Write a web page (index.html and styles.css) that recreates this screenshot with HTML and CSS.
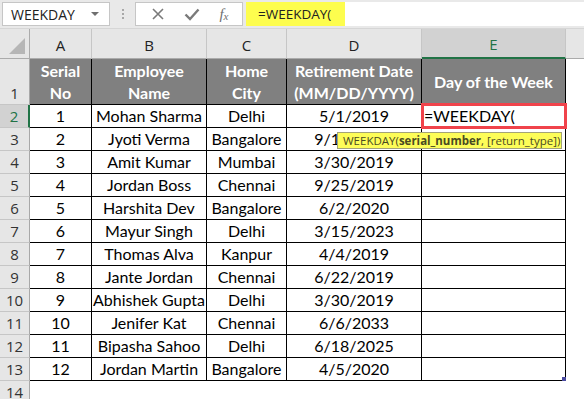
FILE: index.html
```html
<!DOCTYPE html>
<html lang="en">
<head>
  <meta charset="UTF-8" />
  <title>WEEKDAY - Excel</title>
  <link rel="stylesheet" href="styles.css">
</head>
<body>
  <div class="app">
    <div class="formula-bar">
      <div class="name-box">
        <span>WEEKDAY</span>
        <span class="caret"></span>
      </div>
      <div class="grip"><i></i><i></i><i></i></div>
      <div class="fx-buttons">
        <svg width="14" height="14" viewBox="0 0 14 14"><path d="M2 2 L12 12 M12 2 L2 12" stroke="#7a7a7a" stroke-width="1.6" fill="none"/></svg>
        <svg width="16" height="14" viewBox="0 0 16 14"><path d="M1.5 7.5 L6 12 L14.5 2.5" stroke="#7a7a7a" stroke-width="2.4" fill="none"/></svg>
        <span class="fx">f<sub>x</sub></span>
      </div>
      <div class="formula-input"><span class="hl">=WEEKDAY(</span></div>
    </div>

    <div class="sheet">
      <!-- column headers -->
      <div class="ch corner"><span class="tri"></span></div>
      <div class="ch">A</div>
      <div class="ch">B</div>
      <div class="ch">C</div>
      <div class="ch">D</div>
      <div class="ch sel">E</div>
      <div class="ch rest"></div>

      <!-- row 1 : table headings -->
      <div class="rh tall">1</div>
      <div class="th">Serial<br>No</div>
      <div class="th">Employee<br>Name</div>
      <div class="th">Home<br>City</div>
      <div class="th">Retirement Date<br>(MM/DD/YYYY)</div>
      <div class="th">Day of the Week</div>
      <div class="blank"></div>

      <div class="rh sel">2</div><div class="td">1</div><div class="td">Mohan Sharma</div><div class="td">Delhi</div><div class="td">5/1/2019</div><div class="td left">=WEEKDAY(</div><div class="blank"></div>
      <div class="rh">3</div><div class="td">2</div><div class="td">Jyoti Verma</div><div class="td">Bangalore</div><div class="td">9/14/2019</div><div class="td"></div><div class="blank"></div>
      <div class="rh">4</div><div class="td">3</div><div class="td">Amit Kumar</div><div class="td">Mumbai</div><div class="td">3/30/2019</div><div class="td"></div><div class="blank"></div>
      <div class="rh">5</div><div class="td">4</div><div class="td">Jordan Boss</div><div class="td">Chennai</div><div class="td">9/25/2019</div><div class="td"></div><div class="blank"></div>
      <div class="rh">6</div><div class="td">5</div><div class="td">Harshita Dev</div><div class="td">Bangalore</div><div class="td">6/2/2020</div><div class="td"></div><div class="blank"></div>
      <div class="rh">7</div><div class="td">6</div><div class="td">Mayur Singh</div><div class="td">Delhi</div><div class="td">3/15/2023</div><div class="td"></div><div class="blank"></div>
      <div class="rh">8</div><div class="td">7</div><div class="td">Thomas Alva</div><div class="td">Kanpur</div><div class="td">4/4/2019</div><div class="td"></div><div class="blank"></div>
      <div class="rh">9</div><div class="td">8</div><div class="td">Jante Jordan</div><div class="td">Chennai</div><div class="td">6/22/2019</div><div class="td"></div><div class="blank"></div>
      <div class="rh">10</div><div class="td">9</div><div class="td">Abhishek Gupta</div><div class="td">Delhi</div><div class="td">3/30/2019</div><div class="td"></div><div class="blank"></div>
      <div class="rh">11</div><div class="td">10</div><div class="td">Jenifer Kat</div><div class="td">Chennai</div><div class="td">6/6/2033</div><div class="td"></div><div class="blank"></div>
      <div class="rh">12</div><div class="td">11</div><div class="td">Bipasha Sahoo</div><div class="td">Delhi</div><div class="td">6/18/2025</div><div class="td"></div><div class="blank"></div>
      <div class="rh">13</div><div class="td">12</div><div class="td">Jordan Martin</div><div class="td">Bangalore</div><div class="td">4/5/2020</div><div class="td"></div><div class="blank"></div>
      <div class="rh">14</div><div class="blank"></div><div class="blank"></div><div class="blank"></div><div class="blank"></div><div class="blank"></div><div class="blank"></div>
    </div>

    <!-- overlays -->
    <div class="active-cell"></div>
    <div class="tooltip">WEEKDAY(<b>serial_number</b>, [return_type])</div>
    <div class="resize-handle"></div>
  </div>
</body>
</html>
```

FILE: styles.css
```css
:root {
  --bar-bg: #e9e9e9;
  --head-bg: #e6e6e6;
  --head-sel: #d2d2d2;
  --head-line: #c6c6c6;
  --green: #217346;
  --th-bg: #808080;
  --red: #f0434b;
  --tip: #fdfd58;
}

* {
  margin: 0;
  padding: 0;
  box-sizing: border-box;
}

body {
  width: 584px;
  height: 399px;
  overflow: hidden;
  background: #fff;
  font-family: Lato, 'Liberation Sans', sans-serif;
}

.app {
  position: relative;
  width: 584px;
  height: 399px;
}

/* formula bar */
.formula-bar {
  height: 29px;
  background: var(--bar-bg);
  display: flex;
  align-items: flex-start;
  padding-top: 2px;
  border-bottom: 1px solid #d6d6d6;
  font-family: 'Open Sans', 'DejaVu Sans', sans-serif;
  font-size: 13.5px;
  color: #222;
}

.name-box {
  margin-left: 2px;
  width: 108px;
  height: 24px;
  background: #fff;
  border: 1px solid var(--head-line);
  display: flex;
  align-items: center;
  justify-content: space-between;
  padding: 0 10px 0 8px;
  font-size: 14px;
}

.caret {
  width: 0;
  height: 0;
  border-left: 4px solid transparent;
  border-right: 4px solid transparent;
  border-top: 4px solid #6f6f6f;
}

.grip {
  width: 25px;
  height: 24px;
  display: flex;
  flex-direction: column;
  align-items: center;
  justify-content: center;
  gap: 2px;
}

.grip i {
  width: 2px;
  height: 2px;
  background: #a8a8a8;
}

.fx-buttons {
  width: 108px;
  height: 24px;
  background: #fff;
  border: 1px solid var(--head-line);
  display: flex;
  align-items: center;
  justify-content: space-around;
  padding: 0 4px 0 6px;
}

.fx {
  font-family: 'Liberation Serif', serif;
  font-style: italic;
  font-size: 15px;
  color: #6f6f6f;
  line-height: 1;
}

.fx sub {
  font-size: 11px;
  vertical-align: -1px;
}

.formula-input {
  flex: 1;
  height: 24px;
  margin-left: 3px;
  background: #fff;
  display: flex;
}

.hl {
  background: #fdfd4e;
  width: 99px;
  padding-left: 12px;
  line-height: 24px;
}

/* grid */
.sheet {
  display: grid;
  grid-template-columns: 30px 62px 115px 80px 135px 144px 1fr;
  grid-template-rows: 30px 46px;
  grid-auto-rows: 23px;
  font-size: 16px;
  color: #000;
}

.ch {
  background: var(--head-bg);
  border-right: 1px solid var(--head-line);
  border-bottom: 1px solid #ababab;
  font-family: 'Open Sans', 'DejaVu Sans', sans-serif;
  font-size: 15px;
  color: #222;
  display: flex;
  align-items: center;
  justify-content: center;
  padding-top: 2px;
}

.ch.sel {
  background: var(--head-sel);
  color: var(--green);
  border-bottom: 2px solid var(--green);
}

.ch.rest {
  border-right: none;
}

.corner {
  position: relative;
  border-right-color: #ababab;
}

.tri {
  position: absolute;
  right: 4px;
  bottom: 4px;
  width: 0;
  height: 0;
  border-left: 16px solid transparent;
  border-bottom: 16px solid #b6b6b6;
}

.rh {
  background: var(--head-bg);
  border-right: 1px solid #a8a8a8;
  border-bottom: 1px solid var(--head-line);
  font-family: 'Open Sans', 'DejaVu Sans', sans-serif;
  font-size: 15px;
  color: #333;
  display: flex;
  align-items: center;
  justify-content: center;
}

.rh.tall {
  align-items: flex-end;
  padding-bottom: 1px;
}

.rh.sel {
  background: var(--head-sel);
  color: var(--green);
  border-right: 2px solid var(--green);
}

.th {
  background: var(--th-bg);
  color: #fff;
  font-weight: bold;
  text-align: center;
  line-height: 22px;
  border-right: 1px solid #000;
  border-bottom: 1px solid #000;
  display: flex;
  align-items: center;
  justify-content: center;
}

.td {
  border-right: 1px solid #000;
  border-bottom: 1px solid #000;
  text-align: center;
  line-height: 22px;
  white-space: nowrap;
  overflow: hidden;
}

.td.left {
  text-align: left;
  padding-left: 2px;
}

.blank {
  background: #fff;
}

/* overlays */
.active-cell {
  position: absolute;
  left: 421px;
  top: 103px;
  width: 146px;
  height: 26px;
  border: 3px solid var(--red);
}

.tooltip {
  position: absolute;
  left: 337px;
  top: 132px;
  width: 225px;
  height: 17px;
  background: var(--tip);
  border: 1px solid #a3a378;
  font-family: 'Open Sans', 'DejaVu Sans', sans-serif;
  font-size: 11.5px;
  line-height: 15px;
  color: #4a4a22;
  padding-left: 5px;
  white-space: nowrap;
}

.resize-handle {
  position: absolute;
  left: 562px;
  top: 377px;
  width: 4px;
  height: 4px;
  background: #4b4ba0;
}
```
